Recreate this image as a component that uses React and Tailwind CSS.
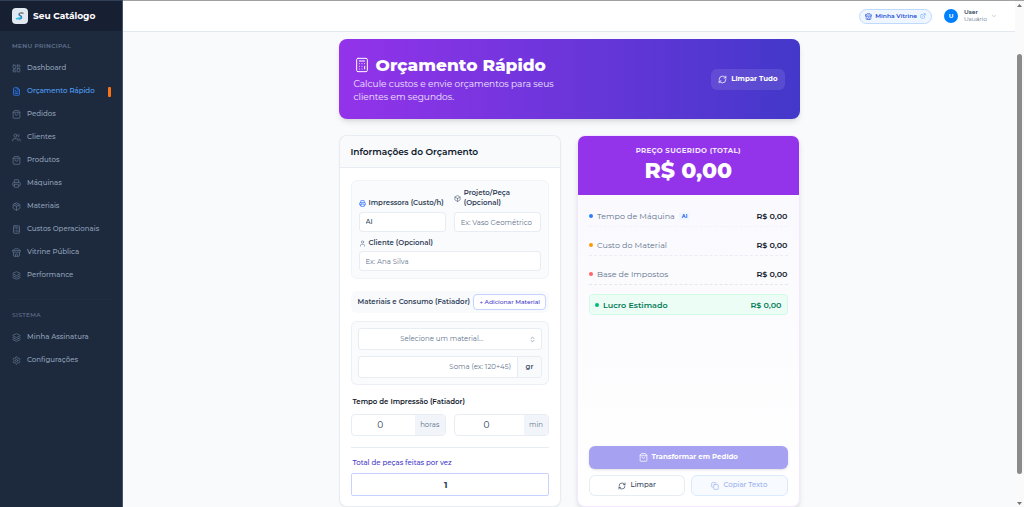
import { useState } from 'react';
import {
  Box,
  Calculator,
  ChevronDown,
  ChevronsUpDown,
  Copy,
  ExternalLink,
  FileText,
  Layers,
  LayoutDashboard,
  Package,
  Printer,
  RefreshCw,
  Settings,
  User,
  Users,
} from 'lucide-react';

function ShoppingBag({ className }) {
  return (
    <svg viewBox="0 0 24 24" className={className} fill="none" stroke="currentColor" strokeWidth="2" strokeLinecap="round" strokeLinejoin="round">
      <path d="M6 2 3 6v14a2 2 0 0 0 2 2h14a2 2 0 0 0 2-2V6l-3-4Z" />
      <path d="M3 6h18" />
      <path d="M16 10a4 4 0 0 1-8 0" />
    </svg>
  );
}

function Store({ className }) {
  return (
    <svg viewBox="0 0 24 24" className={className} fill="none" stroke="currentColor" strokeWidth="2" strokeLinecap="round" strokeLinejoin="round">
      <path d="m2 7 4.410-4.410A2 2 0 0 1 7.830 2h8.340a2 2 0 0 1 1.420.590L22 7" />
      <path d="M4 12v8a2 2 0 0 0 2 2h12a2 2 0 0 0 2-2v-8" />
      <path d="M15 22v-4a2 2 0 0 0-2-2h-2a2 2 0 0 0-2 2v4" />
      <path d="M2 7h20v3a2 2 0 0 1-2 2 3 3 0 0 1-2-1 3 3 0 0 1-4 0 3 3 0 0 1-4 0 3 3 0 0 1-4 0 3 3 0 0 1-2 1 2 2 0 0 1-2-2V7" />
    </svg>
  );
}

const mainMenu = [
  { label: 'Dashboard', icon: LayoutDashboard },
  { label: 'Orçamento Rápido', icon: FileText, active: true },
  { label: 'Pedidos', icon: ShoppingBag },
  { label: 'Clientes', icon: Users },
  { label: 'Produtos', icon: ShoppingBag },
  { label: 'Máquinas', icon: Printer },
  { label: 'Materiais', icon: Package },
  { label: 'Custos Operacionais', icon: Calculator },
  { label: 'Vitrine Pública', icon: Store },
  { label: 'Performance', icon: Layers },
];

const systemMenu = [
  { label: 'Minha Assinatura', icon: Layers },
  { label: 'Configurações', icon: Settings },
];

const costs = [
  { label: 'Tempo de Máquina', dot: 'bg-blue-500', line: 'border-slate-100', tag: 'AI' },
  { label: 'Custo do Material', dot: 'bg-amber-500', line: 'border-slate-200/70' },
  { label: 'Base de Impostos', dot: 'bg-red-400', line: 'border-slate-200' },
];

function Logo() {
  return (
    <span className="flex size-4 items-center justify-center rounded bg-slate-200">
      <svg viewBox="0 0 16 16" className="size-2.5" fill="none" strokeLinecap="round">
        <path d="M12.500 3.500C9 2.500 6.500 3.500 6.500 5.500c0 2 4 2 4 4.500 0 1.500-2 2.500-4.500 2.500" stroke="#2478bd" strokeWidth="2.400" />
        <path d="M12.500 3.500C10 3 8 3.500 7.500 4.500" stroke="#fb923c" strokeWidth="1.500" />
        <path d="M2.500 12.500c2-1.500 4.500-.5 7-2" stroke="#22c3e6" strokeWidth="2.400" />
      </svg>
    </span>
  );
}

function MenuItem({ label, icon: Icon, active }) {
  return (
    <a
      href="#"
      aria-current={active ? 'page' : undefined}
      className={`flex h-[23px] items-center gap-1.5 pr-[11px] pl-3 text-[7px] font-medium ${active ? 'text-blue-400' : 'text-slate-400'}`}
    >
      <Icon className={`size-[9px] ${active ? 'text-blue-500' : 'text-slate-500'}`} />
      {label}
      {active && <span className="ml-auto h-2.5 w-[3px] rounded-[1px] bg-[#f97316]" />}
    </a>
  );
}

function Sidebar() {
  return (
    <aside className="w-[123px] shrink-0 border-r border-slate-600 bg-slate-800">
      <div className="flex h-[31px] items-center gap-[5px] border-t border-slate-700 bg-[#172033] px-3">
        <Logo />
        <span className="text-[9px] font-bold text-white">Seu Catálogo</span>
      </div>
      <nav>
        <h2 className="px-3 pt-[11px] pb-[7px] text-[6px] leading-[8px] font-semibold tracking-wider text-slate-500">MENU PRINCIPAL</h2>
        {mainMenu.map((item) => (
          <MenuItem key={item.label} {...item} />
        ))}
        <div className="mx-2 mt-3 border-t border-slate-700/20" />
        <h2 className="px-3 pt-[11px] pb-[7px] text-[6px] leading-[8px] font-medium tracking-wider text-slate-500">SISTEMA</h2>
        {systemMenu.map((item) => (
          <MenuItem key={item.label} {...item} />
        ))}
      </nav>
    </aside>
  );
}

function TopBar() {
  return (
    <header className="flex h-8 shrink-0 items-center justify-end border-t border-b border-t-neutral-400 border-b-slate-200 bg-white pr-[18px]">
      <a href="#" className="flex h-[15px] items-center gap-[3px] rounded-full border border-blue-200 bg-blue-50 px-[5px] text-[6px] font-semibold text-[#1d4ed8]">
        <Store className="size-[7px]" />
        Minha Vitrine
        <ExternalLink className="size-1.5 text-blue-400" />
      </a>
      <button className="ml-3 flex items-center text-left">
        <span className="flex size-3.5 items-center justify-center rounded-full bg-[#0080ff] text-[6px] font-bold text-white">U</span>
        <span className="ml-1.5 flex flex-col text-[6px] leading-[7px]">
          <span className="font-semibold text-slate-700">User</span>
          <span className="text-slate-500">Usuário</span>
        </span>
        <ChevronDown className="ml-1 size-1.5 text-slate-400" />
      </button>
    </header>
  );
}

function Banner() {
  return (
    <section className="flex h-20 items-center justify-between rounded-lg bg-linear-to-r/srgb from-[#9333ea] to-[#4338ca] px-[15px] shadow-md">
      <div>
        <h1 className="mb-0.5 flex items-center gap-1.5 text-[17px] leading-[20px] font-extrabold text-white">
          <Calculator className="size-4" strokeWidth={1.5} />
          Orçamento Rápido
        </h1>
        <p className="w-[210px] text-[9px] leading-[13px] text-purple-100">
          Calcule custos e envie orçamentos para seus clientes em segundos.
        </p>
      </div>
      <button className="flex h-[21px] items-center gap-1 rounded-md bg-white/10 px-[7px] text-[7px] font-bold text-white">
        <RefreshCw className="size-[9px]" />
        Limpar Tudo
      </button>
    </section>
  );
}

function QuoteForm() {
  const [hours, setHours] = useState('0');
  const [minutes, setMinutes] = useState('0');
  const [pieces, setPieces] = useState('1');
  const field = 'block h-5 w-full rounded border border-slate-200/80 bg-white px-1.5 text-[7px] text-slate-700 placeholder:text-slate-500';
  const label = 'flex items-center gap-[3px] text-[7px] leading-[10px] font-semibold text-slate-700';

  return (
    <section className="rounded-lg border border-slate-200/80 bg-white shadow-xs">
      <h2 className="flex h-8 items-center rounded-t-lg border-b border-slate-200/80 bg-slate-50 px-[11px] text-[9px] font-semibold text-slate-900">
        Informações do Orçamento
      </h2>
      <div className="flex flex-col px-[11px] pt-3 pb-2.5">
        <div className="grid grid-cols-2 items-end gap-x-2 gap-y-1.5 rounded-md border border-slate-100 bg-slate-50/70 p-[7px]">
          <div>
            <label htmlFor="printer" className={label}>
              <Printer className="size-[7px] text-blue-600" />
              Impressora (Custo/h)
            </label>
            <select id="printer" className={`${field} mt-1 appearance-none font-medium`}>
              <option>AI</option>
            </select>
          </div>
          <div>
            <label htmlFor="project" className={label}>
              <Box className="size-[7px] shrink-0 text-slate-600" />
              <span>Projeto/Peça<br />(Opcional)</span>
            </label>
            <input id="project" placeholder="Ex: Vaso Geométrico" className={`${field} mt-1`} />
          </div>
          <div className="col-span-2">
            <label htmlFor="client" className={label}>
              <User className="size-[7px] text-slate-500" />
              Cliente (Opcional)
            </label>
            <input id="client" placeholder="Ex: Ana Silva" className={`${field} mt-[3px]`} />
          </div>
        </div>

        <div className="mt-3 flex h-[22px] items-center justify-between rounded-md bg-slate-50 pr-[3px] pl-[7px] whitespace-nowrap">
          <h3 className="text-[7px] font-semibold text-slate-700">Materiais e Consumo (Fatiador)</h3>
          <button className="h-4 rounded border border-indigo-200 bg-white px-[5px] text-[6px] font-medium text-[#4338ca]">
            + Adicionar Material
          </button>
        </div>

        <div className="mt-2 flex flex-col gap-1.5 rounded-md border border-slate-200/60 bg-slate-50/70 p-1.5">
          <div className="relative">
            <select aria-label="Material" defaultValue="" className="block h-[22px] w-full appearance-none rounded border border-slate-200/80 bg-white pr-4 text-center text-[7px] text-slate-500">
              <option value="">Selecione um material...</option>
            </select>
            <ChevronsUpDown className="pointer-events-none absolute inset-y-0 right-1.5 my-auto size-[7px] text-slate-500" />
          </div>
          <div className="flex h-[22px] overflow-hidden rounded border border-slate-200/80 bg-white">
            <input aria-label="Soma" placeholder="Soma (ex: 120+45)" className="min-w-0 flex-1 px-1.5 text-right text-[7px] placeholder:text-slate-500" />
            <span className="flex w-6 items-center justify-center border-l border-slate-200/80 bg-slate-50 text-[7px] font-semibold text-slate-600">gr</span>
          </div>
        </div>

        <fieldset className="mt-3">
          <legend className="pl-0.5 text-[7px] leading-[10px] font-semibold text-slate-900">Tempo de Impressão (Fatiador)</legend>
          <div className="mt-[7px] grid grid-cols-2 gap-2">
            <div className="flex h-[22px] overflow-hidden rounded border border-slate-200/80">
              <input aria-label="Horas" value={hours} onChange={(e) => setHours(e.target.value)} inputMode="numeric" className="min-w-0 flex-1 pr-1.5 text-center text-[9px] text-slate-700" />
              <span className="flex w-[30px] items-center justify-center bg-slate-100 text-[7px] text-slate-500">horas</span>
            </div>
            <div className="flex h-[22px] overflow-hidden rounded border border-slate-200/80">
              <input aria-label="Minutos" value={minutes} onChange={(e) => setMinutes(e.target.value)} inputMode="numeric" className="min-w-0 flex-1 pr-1.5 text-center text-[9px] text-slate-700" />
              <span className="flex w-6 items-center justify-center bg-slate-100 text-[7px] text-slate-500">min</span>
            </div>
          </div>
        </fieldset>

        <div className="mt-[11px] flex flex-col gap-[5px] border-t border-slate-200/80 pt-2.5">
          <label htmlFor="pieces" className="pl-0.5 text-[7px] leading-[10px] font-medium text-[#4338ca]">Total de peças feitas por vez</label>
          <input id="pieces" value={pieces} onChange={(e) => setPieces(e.target.value)} inputMode="numeric" className="h-[23px] w-full rounded-xs border border-indigo-200 bg-white pr-2 text-center text-[9px] font-bold text-slate-700" />
        </div>
      </div>
    </section>
  );
}

function PriceSummary() {
  return (
    <section className="flex flex-col overflow-hidden rounded-lg border border-purple-100 bg-linear-to-b from-purple-50/40 to-white shadow-md">
      <div className="flex h-[59px] shrink-0 flex-col items-center justify-center gap-px bg-[#9333ea] text-white">
        <h2 className="text-[7px] leading-[10px] font-bold tracking-wider text-purple-100">PREÇO SUGERIDO (TOTAL)</h2>
        <p className="text-[22px] leading-[28px] font-extrabold">R$ 0,00</p>
      </div>
      <div className="flex flex-1 flex-col px-[11px] pt-[3px] pb-2.5">
        <ul>
          {costs.map(({ label, dot, line, tag }) => (
            <li key={label} className={`flex h-[29px] items-end justify-between border-b border-dashed pb-1 text-[8px] leading-[12px] ${line}`}>
              <span className="flex items-center gap-1 text-slate-500">
                <span className={`size-1 rounded-full ${dot}`} />
                {label}
                {tag && <span className="rounded-xs bg-blue-50 px-[3px] text-[5px] leading-[8px] font-bold text-blue-600">{tag}</span>}
              </span>
              <span className="font-semibold text-slate-900">R$ 0,00</span>
            </li>
          ))}
        </ul>
        <div className="mt-[9px] flex h-[21px] items-center justify-between rounded border border-emerald-100 bg-emerald-50 px-[5px] text-[8px] font-semibold text-emerald-700">
          <span className="flex items-center gap-1">
            <span className="size-1 rounded-full bg-emerald-500" />
            Lucro Estimado
          </span>
          <span>R$ 0,00</span>
        </div>
        <div className="mt-auto grid grid-cols-2 gap-1.5">
          <button disabled className="col-span-2 flex h-[23px] items-center justify-center gap-1 rounded-md bg-[#a7a1f2] text-[7px] font-bold text-white shadow-sm">
            <ShoppingBag className="size-[9px]" />
            Transformar em Pedido
          </button>
          <button className="flex h-[21px] items-center justify-center gap-1 rounded-md border border-slate-200/80 bg-white text-[7px] font-medium text-slate-700">
            <RefreshCw className="size-2" />
            Limpar
          </button>
          <button disabled className="flex h-[21px] items-center justify-center gap-1 rounded-md border border-blue-100 bg-blue-50/50 text-[7px] font-medium text-[#9bb0ee]">
            <Copy className="size-2" />
            Copiar Texto
          </button>
        </div>
      </div>
    </section>
  );
}

function ScrollRail() {
  return (
    <div className="flex w-[9px] shrink-0 flex-col items-center border-t border-neutral-400 bg-neutral-50 pt-[3px] pb-0.5" aria-hidden="true">
      <svg viewBox="0 0 5 3" className="h-[3px] w-[5px] fill-neutral-500"><path d="M0 3 2.500 0 5 3z" /></svg>
      <div className="mt-[47px] mb-7 w-[5px] flex-1 rounded-full bg-[#8b8b8b]" />
      <svg viewBox="0 0 5 3" className="h-[3px] w-[5px] fill-neutral-500"><path d="M0 0 2.500 3 5 0z" /></svg>
    </div>
  );
}

export default function App() {
  return (
    <div className="flex h-screen overflow-hidden bg-slate-50 font-['Montserrat','Inter',sans-serif] text-slate-700">
      <Sidebar />
      <div className="flex min-w-0 flex-1 flex-col">
        <TopBar />
        <main className="mx-auto flex w-full max-w-[461px] flex-1 flex-col gap-4 pt-[7px]">
          <Banner />
          <div className="grid grid-cols-2 gap-4">
            <QuoteForm />
            <PriceSummary />
          </div>
        </main>
      </div>
      <ScrollRail />
    </div>
  );
}
